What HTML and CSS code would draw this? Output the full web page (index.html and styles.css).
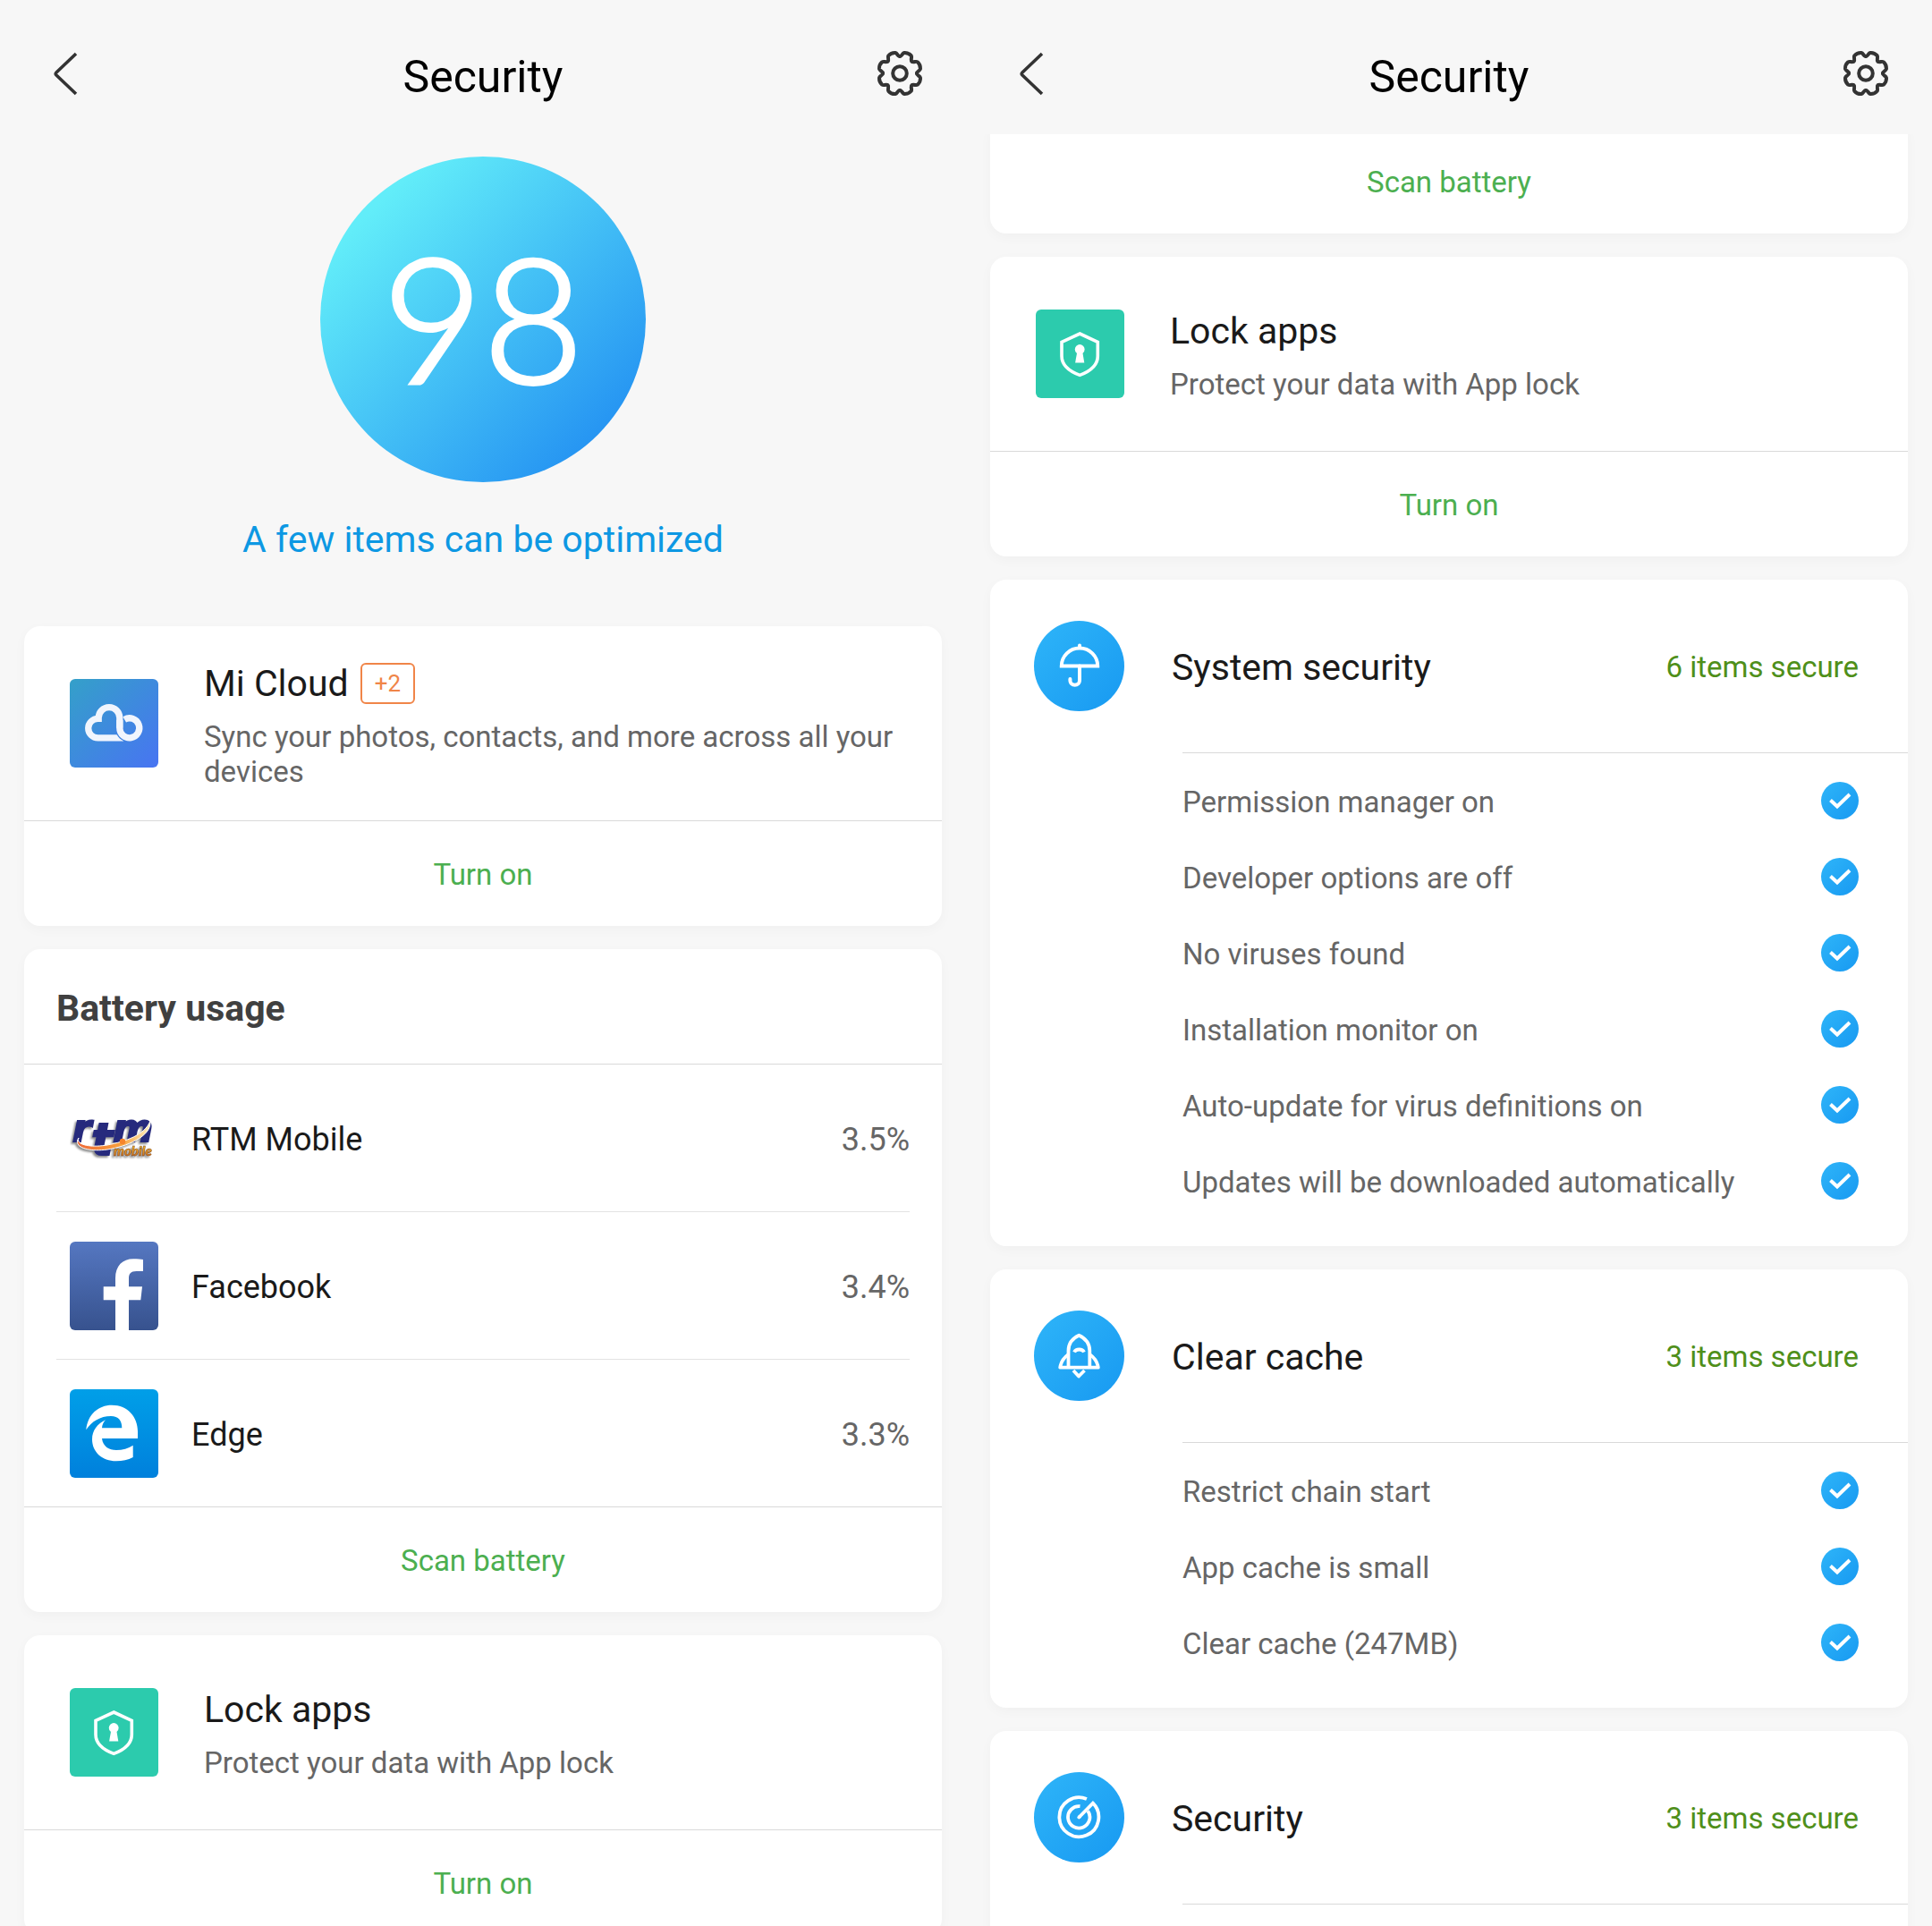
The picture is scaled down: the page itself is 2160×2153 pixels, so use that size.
FILE: index.html
```html
<!DOCTYPE html>
<html lang="en">
<head>
    <meta charset="UTF-8">
    <meta name="viewport" content="width=device-width, initial-scale=1.0">
    <title>Security</title>
    <link rel="stylesheet" href="styles.css">
</head>
<body>
    <!-- Shared icons -->
    <svg class="icon-defs" aria-hidden="true">
        <defs>
            <linearGradient id="grad-cloud" x1="0" y1="0" x2="1" y2="1">
                <stop offset="0" stop-color="#34a0c9"/>
                <stop offset="1" stop-color="#4874f2"/>
            </linearGradient>
            <linearGradient id="grad-facebook" x1="0" y1="0" x2="0" y2="1">
                <stop offset="0" stop-color="#5577c1"/>
                <stop offset="1" stop-color="#37528e"/>
            </linearGradient>
            <linearGradient id="grad-edge" x1="0" y1="0" x2="0" y2="1">
                <stop offset="0" stop-color="#009fe8"/>
                <stop offset="1" stop-color="#0080dc"/>
            </linearGradient>
            <linearGradient id="grad-blue" x1="0" y1="0" x2="1" y2="1">
                <stop offset="0.1" stop-color="#2cb2f8"/>
                <stop offset="0.9" stop-color="#1a9cf2"/>
            </linearGradient>
            <linearGradient id="grad-swoosh" x1="0" y1="0" x2="1" y2="0">
                <stop offset="0" stop-color="#ee6a3a"/>
                <stop offset="0.6" stop-color="#f8a13c"/>
                <stop offset="1" stop-color="#fff0c0"/>
            </linearGradient>
            <linearGradient id="grad-mobile" x1="0" y1="0" x2="0" y2="1">
                <stop offset="0" stop-color="#ffc928"/>
                <stop offset="1" stop-color="#c8641e"/>
            </linearGradient>
            <path id="gear-tooth" d="M0,-19 C2.5,-19 2.8,-22.6 5,-23 C8,-23.2 10.7,-22 12.7,-19.8 C14,-18 11.7,-15.2 13.4,-13.4"/>
        </defs>
        <symbol id="icon-back" viewBox="0 0 54 54">
            <path d="M38 5 L16 26 Q14.5 27.5 16 29 L38 50" fill="none" stroke="#333" stroke-width="3.6"/>
        </symbol>
        <symbol id="icon-gear" viewBox="0 0 54 54">
            <g transform="translate(27 27)" fill="none" stroke="#333" stroke-width="4" stroke-linecap="round">
                <use href="#gear-tooth"/>
                <use href="#gear-tooth" transform="rotate(45)"/>
                <use href="#gear-tooth" transform="rotate(90)"/>
                <use href="#gear-tooth" transform="rotate(135)"/>
                <use href="#gear-tooth" transform="rotate(180)"/>
                <use href="#gear-tooth" transform="rotate(225)"/>
                <use href="#gear-tooth" transform="rotate(270)"/>
                <use href="#gear-tooth" transform="rotate(315)"/>
                <circle r="7.8"/>
            </g>
        </symbol>
        <symbol id="icon-lock" viewBox="0 0 99 99">
            <rect width="99" height="99" rx="6" fill="#2ccbad"/>
            <path d="M49.2 27 L69.3 36.3 V52 C69.3 62 61 69 49.2 73.4 C37.4 69 29 62 29 52 V36.3 Z" fill="none" stroke="#fff" stroke-width="3.6"/>
            <circle cx="49.2" cy="44.5" r="5.4" fill="#fff"/>
            <path d="M46.5 46 H52 L54.3 59.5 H44.1 Z" fill="#fff"/>
        </symbol>
        <symbol id="icon-check" viewBox="0 0 42 42">
            <circle cx="21" cy="21" r="21" fill="url(#grad-blue)"/>
            <path d="M10.5 20.5 L18 27.5 L32 14" fill="none" stroke="#fff" stroke-width="4"/>
        </symbol>
    </svg>

    <main class="screens">
        <!-- Top of the security page -->
        <section class="screen">
            <header class="header">
                <button class="icon-button" type="button" aria-label="Back"><svg><use href="#icon-back"/></svg></button>
                <h1 class="header-title">Security</h1>
                <button class="icon-button" type="button" aria-label="Settings"><svg><use href="#icon-gear"/></svg></button>
            </header>

            <div class="list">
                <div class="summary">
                    <div class="score">98</div>
                    <p class="summary-text">A few items can be optimized</p>
                </div>

                <article class="card">
                    <div class="promo">
                        <svg class="app-icon" viewBox="0 0 99 99" aria-hidden="true">
                            <rect width="99" height="99" rx="6" fill="url(#grad-cloud)"/>
                            <g fill="none" stroke="#f1f5fd" stroke-width="7.3">
                                <path d="M60 65.9 H31.5 A10.8 10.8 0 0 1 31.5 44.3 H32.2 V43.5 A11.8 11.8 0 0 1 55.8 43.5 V55"/>
                                <path d="M55.8 54.7 A11 11 0 0 0 64 65.4" stroke="#4083e2" stroke-width="10"/>
                                <path d="M55.8 46 V54.7 A11 11 0 1 0 61.2 45.3"/>
                            </g>
                        </svg>
                        <div class="promo-text">
                            <h2 class="promo-title">Mi Cloud <span class="badge">+2</span></h2>
                            <p class="promo-info">Sync your photos, contacts, and more across all your devices</p>
                        </div>
                    </div>
                    <button class="card-action" type="button">Turn on</button>
                </article>

                <article class="card">
                    <h2 class="card-heading">Battery usage</h2>
                    <ul class="usage">
                        <li class="usage-row">
                            <svg class="app-icon" viewBox="0 0 99 99" aria-hidden="true">
                                <g class="rtm-logo">
                                    <text class="rtm-name" x="3" y="53">r<tspan class="rtm-tall" dy="15">t</tspan><tspan dy="-15">m</tspan></text>
                                    <path d="M10 49 C6 57 24 60 42 57 C62 53 84 46 90 30 C92 48 62 59 42 62 C20 65 3 59 10 49 Z" fill="url(#grad-swoosh)" stroke="#fff" stroke-width="1"/>
                                    <circle cx="59" cy="53" r="3.2" fill="#f6852c"/>
                                    <text class="rtm-sub" x="49" y="69">mobile</text>
                                </g>
                            </svg>
                            <span class="usage-name">RTM Mobile</span>
                            <span class="usage-value">3.5%</span>
                        </li>
                        <li class="usage-row">
                            <svg class="app-icon" viewBox="0 0 99 99" aria-hidden="true">
                                <rect width="99" height="99" rx="6" fill="url(#grad-facebook)"/>
                                <path d="M51 99 V65.3 H37.7 V50.3 H51 V41 C51 27 59 19.3 71 19.3 C76 19.3 80 19.6 82 20 V33 H74.5 C68 33 66 36 66 41 V50.3 H81 L79.3 65.3 H66 V99 Z" fill="#fff"/>
                            </svg>
                            <span class="usage-name">Facebook</span>
                            <span class="usage-value">3.4%</span>
                        </li>
                        <li class="usage-row">
                            <svg class="app-icon" viewBox="0 0 99 99" aria-hidden="true">
                                <rect width="99" height="99" rx="6" fill="url(#grad-edge)"/>
                                <path d="M18.3 45.3 C20 28 32 17.7 47 17.7 C65 17.7 76 31 76 47 V55 H36 C37 64 44 68 52 68 C59 68 65.5 66 70.7 62.7 V76 C65 79 59 80.3 52 80.3 C36 80.3 25 70 25 56 C25 46 31 38.5 40 34.3 C37.5 37 36.2 40 36 43.3 H58.3 C58.3 35 54.5 30 46 30 C34 30 24.5 36 18.3 45.3 Z" fill="#fff"/>
                            </svg>
                            <span class="usage-name">Edge</span>
                            <span class="usage-value">3.3%</span>
                        </li>
                    </ul>
                    <button class="card-action" type="button">Scan battery</button>
                </article>

                <article class="card">
                    <div class="promo">
                        <svg class="app-icon" aria-hidden="true"><use href="#icon-lock"/></svg>
                        <div class="promo-text">
                            <h2 class="promo-title">Lock apps</h2>
                            <p class="promo-info">Protect your data with App lock</p>
                        </div>
                    </div>
                    <button class="card-action" type="button">Turn on</button>
                </article>
            </div>
        </section>

        <!-- Same page, scrolled down -->
        <section class="screen">
            <header class="header">
                <button class="icon-button" type="button" aria-label="Back"><svg><use href="#icon-back"/></svg></button>
                <h1 class="header-title">Security</h1>
                <button class="icon-button" type="button" aria-label="Settings"><svg><use href="#icon-gear"/></svg></button>
            </header>

            <div class="list">
                <article class="card card-cut">
                    <button class="card-action" type="button">Scan battery</button>
                </article>

                <article class="card">
                    <div class="promo">
                        <svg class="app-icon" aria-hidden="true"><use href="#icon-lock"/></svg>
                        <div class="promo-text">
                            <h2 class="promo-title">Lock apps</h2>
                            <p class="promo-info">Protect your data with App lock</p>
                        </div>
                    </div>
                    <button class="card-action" type="button">Turn on</button>
                </article>

                <article class="card">
                    <div class="group-head">
                        <svg class="group-icon" viewBox="0 0 101 101" aria-hidden="true">
                            <circle cx="50.5" cy="50.5" r="50.5" fill="url(#grad-blue)"/>
                            <g fill="none" stroke="#fff" stroke-width="4">
                                <path d="M30.8 50.5 A20.2 20 0 0 1 71.2 50.5 Z"/>
                                <path d="M51 27.5 V30" stroke-linecap="round"/>
                                <path d="M51 50.5 V66.5 A5.3 5.3 0 0 1 40.4 66.5 V65" stroke-linecap="round"/>
                            </g>
                        </svg>
                        <h2 class="group-title">System security</h2>
                        <span class="group-status">6 items secure</span>
                    </div>
                    <ul class="checks">
                        <li class="check-row"><span>Permission manager on</span><svg><use href="#icon-check"/></svg></li>
                        <li class="check-row"><span>Developer options are off</span><svg><use href="#icon-check"/></svg></li>
                        <li class="check-row"><span>No viruses found</span><svg><use href="#icon-check"/></svg></li>
                        <li class="check-row"><span>Installation monitor on</span><svg><use href="#icon-check"/></svg></li>
                        <li class="check-row"><span>Auto-update for virus definitions on</span><svg><use href="#icon-check"/></svg></li>
                        <li class="check-row"><span>Updates will be downloaded automatically</span><svg><use href="#icon-check"/></svg></li>
                    </ul>
                </article>

                <article class="card">
                    <div class="group-head">
                        <svg class="group-icon" viewBox="0 0 101 101" aria-hidden="true">
                            <circle cx="50.5" cy="50.5" r="50.5" fill="url(#grad-blue)"/>
                            <g fill="none" stroke="#fff" stroke-width="3.8" stroke-linejoin="round">
                                <path d="M38.5 63.7 V45 C38.5 37 43 31 50.3 27.7 C57.5 31 62.3 37 62.3 45 V63.7"/>
                                <path d="M38.5 49 C33 53 30 58 29.2 63.7 H71.8 C71 58 68 53 62.3 49"/>
                                <path d="M45 46.5 C47 42.5 54 42.5 56 46.5"/>
                                <path d="M44 67 L50 73.5 L56.5 67"/>
                            </g>
                        </svg>
                        <h2 class="group-title">Clear cache</h2>
                        <span class="group-status">3 items secure</span>
                    </div>
                    <ul class="checks">
                        <li class="check-row"><span>Restrict chain start</span><svg><use href="#icon-check"/></svg></li>
                        <li class="check-row"><span>App cache is small</span><svg><use href="#icon-check"/></svg></li>
                        <li class="check-row"><span>Clear cache (247MB)</span><svg><use href="#icon-check"/></svg></li>
                    </ul>
                </article>

                <article class="card">
                    <div class="group-head">
                        <svg class="group-icon" viewBox="0 0 101 101" aria-hidden="true">
                            <circle cx="50.5" cy="50.5" r="50.5" fill="url(#grad-blue)"/>
                            <g fill="none" stroke="#fff" stroke-width="3.8" stroke-linejoin="round">
                                <path d="M58.9 30 A22 22 0 1 0 65.9 34.7 L50.3 50.5" stroke-linejoin="miter"/>
                                <path d="M51.5 38.2 A12.2 12.2 0 1 0 60.2 43.3"/>
                                <path d="M50.3 50.5 L51 49.8" stroke-linecap="round"/>
                            </g>
                        </svg>
                        <h2 class="group-title">Security</h2>
                        <span class="group-status">3 items secure</span>
                    </div>
                    <ul class="checks"></ul>
                </article>
            </div>
        </section>
    </main>
</body>
</html>
```

FILE: styles.css
```css
* {
    box-sizing: border-box;
}

body {
    font-family: Roboto, "Liberation Sans", sans-serif;
    margin: 0;
    background-color: #f7f7f7;
    color: #1a1a1a;
}

h1, h2, p, ul {
    margin: 0;
    padding: 0;
    font-weight: 400;
}

ul {
    list-style: none;
}

button {
    border: none;
    background: none;
    padding: 0;
    font-family: inherit;
    cursor: pointer;
}

.icon-defs {
    position: absolute;
    width: 0;
    height: 0;
}

.screens {
    display: grid;
    grid-template-columns: 1fr 1fr;
}

.screen {
    display: flex;
    flex-direction: column;
    height: 100vh;
    overflow: hidden;
}

/* Header */
.header {
    display: flex;
    justify-content: space-between;
    align-items: flex-start;
    padding: 55px 47px 34px;
}

.header-title {
    padding-top: 2px;
    font-size: 50px;
    line-height: 59px;
    color: #000;
}

.icon-button,
.icon-button svg {
    display: block;
    width: 54px;
    height: 54px;
}

.list {
    flex: 1;
    display: flex;
    flex-direction: column;
    gap: 26px;
    min-height: 0;
    padding: 0 27px;
    overflow: hidden;
}

/* Score */
.summary {
    display: flex;
    flex-direction: column;
    align-items: center;
    gap: 41px;
    padding: 25px 0 47px;
}

.score {
    display: flex;
    align-items: center;
    justify-content: center;
    width: 364px;
    height: 364px;
    padding-bottom: 8px;
    border-radius: 50%;
    background: linear-gradient(135deg, #62edf9 16%, #2492f2 88%);
    color: #fff;
    font-family: Lato, sans-serif;
    font-weight: 300;
    font-size: 194px;
    line-height: 200px;
    -webkit-text-stroke: 4px #fff;
}

.summary-text {
    font-size: 41px;
    line-height: 47px;
    color: #0d98e3;
}

/* Cards */
.card {
    flex-shrink: 0;
    background-color: #fff;
    border-radius: 18px;
    box-shadow: 0 4px 14px rgba(0, 0, 0, 0.03);
}

.card-cut {
    margin-top: -6px;
    border-top-left-radius: 0;
    border-top-right-radius: 0;
}

.card-action {
    display: block;
    width: 100%;
    padding: 40px 39px 38px;
    font-size: 33px;
    line-height: 39px;
    color: #4caf50;
}

.card-heading {
    padding: 42px 36px 38px;
    border-bottom: 1px solid #d9d9d9;
    font-size: 41px;
    line-height: 48px;
    font-weight: 700;
    color: #404040;
}

.app-icon {
    flex-shrink: 0;
    width: 99px;
    height: 99px;
}

.promo {
    display: flex;
    align-items: center;
    gap: 51px;
    min-height: 218px;
    padding: 0 48px 0 51px;
    border-bottom: 1px solid #d9d9d9;
}

.promo-text {
    padding-top: 4px;
}

.promo-title {
    display: flex;
    align-items: center;
    gap: 13px;
    margin-bottom: 16px;
    font-size: 41px;
    line-height: 48px;
}

.promo-info {
    font-size: 33px;
    line-height: 39px;
    color: #666;
}

.badge {
    padding: 6px 14px;
    border: 2px solid #f08548;
    border-radius: 6px;
    font-size: 26px;
    line-height: 30px;
    color: #f08548;
}

/* Battery usage */
.usage {
    padding: 0 36px;
    border-bottom: 1px solid #d9d9d9;
}

.usage-row {
    display: flex;
    align-items: center;
    gap: 37px;
    min-height: 165px;
    padding-left: 15px;
    border-bottom: 1px solid #e3e3e3;
    font-size: 36px;
    line-height: 42px;
}

.usage-row:last-child {
    min-height: 164px;
    border-bottom: none;
}

.usage-name,
.usage-value {
    padding-top: 4px;
}

.usage-value {
    margin-left: auto;
    color: #666;
}

.rtm-logo {
    filter: drop-shadow(-2px 2px 1px rgba(90, 90, 90, 0.7));
    font-family: "DejaVu Sans", sans-serif;
    font-style: italic;
    font-weight: 700;
}

.rtm-name {
    font-size: 43px;
    fill: #262a7d;
    stroke: #262a7d;
    stroke-width: 2px;
}

.rtm-tall {
    font-size: 50px;
}

.rtm-sub {
    font-family: Lato, sans-serif;
    font-weight: 900;
    font-size: 15px;
    fill: url(#grad-mobile);
    stroke: #6b3a1a;
    stroke-width: 0.4px;
}

/* Security groups */
.group-head {
    display: flex;
    align-items: center;
    gap: 53px;
    min-height: 193px;
    padding: 0 55px 0 49px;
}

.group-icon {
    flex-shrink: 0;
    width: 101px;
    height: 101px;
}

.group-title,
.group-status {
    padding-top: 2px;
}

.group-title {
    font-size: 41px;
    line-height: 48px;
}

.group-status {
    margin-left: auto;
    font-size: 33px;
    line-height: 39px;
    color: #4f8f1a;
}

.checks {
    margin-left: 215px;
    padding: 10px 55px 31px 0;
    border-top: 1px solid #d9d9d9;
}

.check-row {
    display: flex;
    align-items: center;
    justify-content: space-between;
    min-height: 85px;
    font-size: 33px;
    line-height: 39px;
    color: #666;
}

.check-row span {
    padding-top: 3px;
}

.check-row svg {
    flex-shrink: 0;
    width: 42px;
    height: 42px;
}

@media (max-width: 1400px) {
    .screens {
        grid-template-columns: 1fr;
    }

    .screen {
        height: auto;
    }
}
```
